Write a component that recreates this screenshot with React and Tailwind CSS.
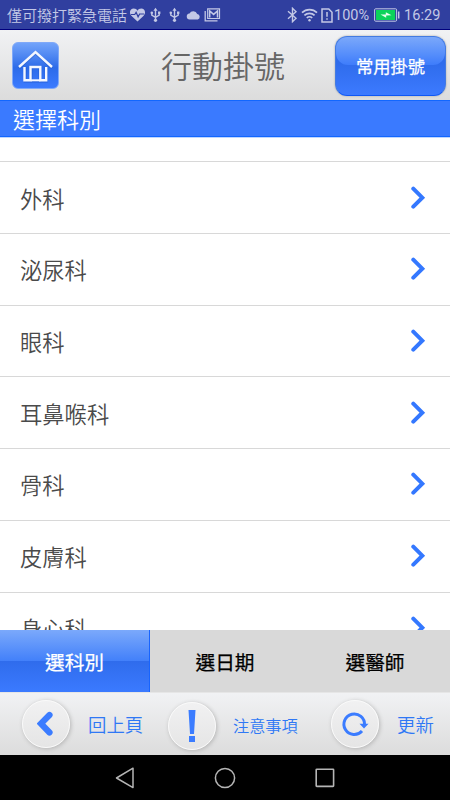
const departments = ['外科', '泌尿科', '眼科', '耳鼻喉科', '骨科', '皮膚科', '身心科'];

function Usb({ className }) {
  return (
    <svg className={className} width="11" height="16" viewBox="0 0 11 16" fill="none" stroke="currentColor" strokeWidth="1.4">
      <path d="M5.5 3v10M1.8 6v2.2l3.7 2.3M9.2 6v2.2L5.5 10.5" />
      <path d="M5.5 .8 7.6 3.8H3.4z" fill="currentColor" stroke="none" />
      <circle cx="5.5" cy="13.3" r="1.6" fill="currentColor" stroke="none" />
      <circle cx="1.8" cy="5.8" r="1.3" fill="currentColor" stroke="none" />
      <path d="M8 4.5h2.4v2.4H8z" fill="currentColor" stroke="none" />
    </svg>
  );
}

function StatusBar() {
  return (
    <div className="flex h-[30px] shrink-0 items-center border-b border-[#00007d] bg-[#303f9f] pl-[7px] pr-[9px] text-[#c3c8e6]">
      <span className="w-[122px] whitespace-nowrap text-[15px] font-[350] leading-[30px]">僅可撥打緊急電話</span>
      <svg width="17" height="16" viewBox="0 0 17 16">
        <path d="M8.5 14.5 2.6 9C-.7 5.5 1.5 1.5 4.8 1.5c1.7 0 2.9.9 3.7 2.2.8-1.3 2-2.2 3.7-2.2 3.3 0 5.5 4 2.2 7.5z" fill="currentColor" />
        <path d="M2 7.5h3.8l1.3-2.2 2 4.5 1.5-2.8H15" fill="none" stroke="#303f9f" strokeWidth="1.2" />
      </svg>
      <Usb className="ml-[4px] mt-px" />
      <Usb className="ml-[8px] mt-px" />
      <svg className="ml-[6px]" width="15" height="12" viewBox="0 0 15 12" fill="currentColor">
        <path d="M4 10.5a3 3 0 0 1-.5-6 4.2 4.2 0 0 1 7.7.4 2.9 2.9 0 0 1 .6 5.6z" />
      </svg>
      <svg className="ml-[3px] mt-px" width="17" height="14" viewBox="0 0 17 14" fill="none" stroke="currentColor">
        <path d="M1.2 3v9.8h12.3" strokeWidth="1.3" />
        <path d="M3.7.8h11.8v9.7H3.7z" strokeWidth="1.2" />
        <path d="M5.7 9.5V3l3.9 3.4L13.5 3v6.5" strokeWidth="1.5" />
      </svg>
      <svg className="ml-auto mt-px" width="11" height="16" viewBox="0 0 11 16" fill="none" stroke="currentColor" strokeWidth="1.4">
        <path d="M1 4.2 9 11.3 5.5 14.7V1.3L9 4.7 1 11.8" />
      </svg>
      <svg className="ml-[3px]" width="17" height="14" viewBox="0 0 17 14" fill="none" stroke="currentColor" strokeWidth="1.7">
        <path d="M1 4.7a10.6 10.6 0 0 1 15 0M3.4 7.4a7.2 7.2 0 0 1 10.2 0M5.8 10a3.9 3.9 0 0 1 5.4 0" />
        <circle cx="8.5" cy="12.3" r="1.2" fill="currentColor" stroke="none" />
      </svg>
      <svg className="ml-[3px] mt-px" width="12" height="15" viewBox="0 0 12 15" fill="none" stroke="currentColor" strokeWidth="1.5">
        <path d="M1 1h6.8L11 4.2V14H1zM6 4v4.8M6 10.2v1.6" />
      </svg>
      <span className="ml-px w-[39px] whitespace-nowrap pt-[2px] font-[Roboto,sans-serif] text-[14.5px]">100%</span>
      <svg className="ml-px" width="26" height="14" viewBox="0 0 26 14">
        <rect x=".6" y=".8" width="22" height="12.4" rx="1" fill="none" stroke="currentColor" />
        <rect x="2" y="2" width="19.2" height="10" fill="#0bd35a" />
        <path d="M24.7 3.5v7" stroke="currentColor" strokeWidth="1.5" />
        <path d="m6.5 6.6 5.3-.1V4.2l5.7 3.1-5.3.2v2.3z" fill="#e5fff0" />
      </svg>
      <span className="ml-[4px] w-[37px] whitespace-nowrap pt-[2px] font-[Roboto,sans-serif] text-[14.5px] tracking-[0.1px]">16:29</span>
    </div>
  );
}

function Header() {
  return (
    <div className="grid h-[70px] shrink-0 grid-cols-[112px_1fr_115px] items-center bg-linear-to-b from-[#f1f2f4] to-[#dcdcdc]">
      <button className="ml-[11.5px] mt-[1px] flex size-[47px] items-center justify-center rounded-[6px] border border-[#80a9f8] bg-linear-to-b from-[#72a3fa] via-[#2c6be9] via-55% to-[#3c7bff]">
        <svg width="37" height="36" viewBox="0 0 37 36" fill="none" stroke="#1c51bd" strokeWidth="3">
          <path d="m2 19 16.5-15L35 19M8.2 18.5v13.8h21V18.5M14 32V18h9v14" transform="translate(0 1)" opacity=".4" />
          <path d="m2 19 16.5-15L35 19M7.5 19v13.3h6V19h9.8v13.3h5.9V19" stroke="#f5f8ff" strokeWidth="2.4" />
          <path d="M13.8 32.3h9.6" stroke="#f5f8ff" strokeWidth="2" />
        </svg>
      </button>
      <h1 className="whitespace-nowrap pr-[1px] text-center text-[31px] font-[350] leading-[70px] text-[#666]">行動掛號</h1>
      <button className="mr-[4px] mt-[1px] grid h-[60px] overflow-hidden rounded-[12px] border border-[#447be0] border-b-[#0f57f5] bg-linear-to-b from-[#2f6cec] from-45% to-[#3c7aff] shadow-[0_0_2px_#9b9b9b]">
        <span className="col-start-1 row-start-1 h-[28px] rounded-b-[12px] bg-linear-to-b from-[#7ba8fa] to-[#3e7cfb]" />
        <span className="col-start-1 row-start-1 self-center whitespace-nowrap text-[17.3px] font-normal leading-[26px] text-white [-webkit-text-stroke:0.25px]">常用掛號</span>
      </button>
    </div>
  );
}

function Chevron() {
  return (
    <svg className="mr-[24px]" width="16" height="24" viewBox="0 0 16 24" fill="none" stroke="#3478ff" strokeWidth="4" strokeLinecap="round" strokeLinejoin="miter">
      <path d="m3.3 2.7 9 9-9 9" />
    </svg>
  );
}

function RoundIcon({ className, children }) {
  return (
    <span className={`flex size-[48px] shrink-0 items-center justify-center rounded-full border-[1.5px] border-[#fafafa] bg-linear-to-b from-[#f1f1f2] to-[#e5e5e5] shadow-[1px_1px_4px_#b5b5b5] ${className}`}>
      {children}
    </span>
  );
}

export default function App() {
  return (
    <div className="flex h-[800px] w-[450px] flex-col overflow-hidden bg-white font-['Noto_Sans_CJK_TC',sans-serif]">
      <StatusBar />
      <Header />
      <div className="flex h-[37px] shrink-0 items-center border-y border-[#1267ff] bg-[#3a7aff] pl-[13px] text-[22px] leading-[34px] text-white shadow-[0_1px_#bfd6ff]">
        <span className="-mt-px font-[350]">選擇科別</span>
      </div>
      <main className="min-h-0 flex-1 overflow-hidden pt-[24.4px]">
        {departments.map((name) => (
          <div key={name} className="flex h-[71.7px] items-center justify-between border-t-[1.5px] border-[#d8d8d8] pl-[20px]">
            <span className="text-[22.3px] font-[350] leading-[34px] text-[#4a4a4a]">{name}</span>
            <Chevron />
          </div>
        ))}
      </main>
      <div className="grid h-[62px] shrink-0 grid-cols-3 bg-[#d9d9d9] text-[19.7px] font-normal text-black [-webkit-text-stroke:0.25px]">
        <button className="border-r border-[#1764ff] bg-[linear-gradient(#7ba9fb,#4280fa_50%,#2f6cec_50%,#3b7aff)] pt-px text-white">選科別</button>
        <button className="pt-px">選日期</button>
        <button className="pt-px">選醫師</button>
      </div>
      <nav className="flex h-[63px] shrink-0 items-center whitespace-nowrap border-t border-[#e6e6e6] bg-linear-to-b from-[#f1f2f4] to-[#dcdcdc] font-[350] text-[#2f78f5]">
        <RoundIcon className="ml-[22px]">
          <svg width="18" height="28" viewBox="0 0 18 28" fill="none" stroke="#3b7cff" strokeWidth="6.2" strokeLinecap="round">
            <path d="M12.5 5 4 13.7l8.5 8.8" />
          </svg>
        </RoundIcon>
        <span className="ml-[18px] w-[56px] pt-px text-[18.4px]">回上頁</span>
        <RoundIcon className="ml-[24px] mt-[4px]">
          <svg width="10" height="34" viewBox="0 0 10 34" fill="#3b7cff">
            <path d="M1.5 1h7L7 25H3zM2 27h6v6H2z" />
          </svg>
        </RoundIcon>
        <span className="ml-[17px] w-[66px] pt-[2px] text-[16.2px]">注意事項</span>
        <RoundIcon className="ml-[32px]">
          <svg width="28" height="26" viewBox="0 0 28 26" fill="none" stroke="#3b7cff" strokeWidth="3">
            <path d="M23.5 14A10.3 10.3 0 1 0 21 20" />
            <path d="M18.5 12.7h9L23 17.5z" fill="#3b7cff" stroke="none" />
          </svg>
        </RoundIcon>
        <span className="ml-[18px] pt-px text-[18.4px]">更新</span>
      </nav>
      <div className="flex h-[45px] shrink-0 items-center justify-between bg-black px-[115px]">
        <svg width="20" height="22" viewBox="0 0 20 22" fill="none" stroke="#b5b5b5" strokeWidth="1.5" strokeLinejoin="round">
          <path d="M18 1.2v19.4L1.5 11z" />
        </svg>
        <svg width="22" height="22" viewBox="0 0 22 22" fill="none" stroke="#b5b5b5" strokeWidth="1.5">
          <circle cx="11" cy="11" r="9.6" />
        </svg>
        <svg width="20" height="20" viewBox="0 0 20 20" fill="none" stroke="#b5b5b5" strokeWidth="1.6">
          <rect x="1.2" y="1.2" width="17.4" height="17.2" rx=".6" />
        </svg>
      </div>
    </div>
  );
}
